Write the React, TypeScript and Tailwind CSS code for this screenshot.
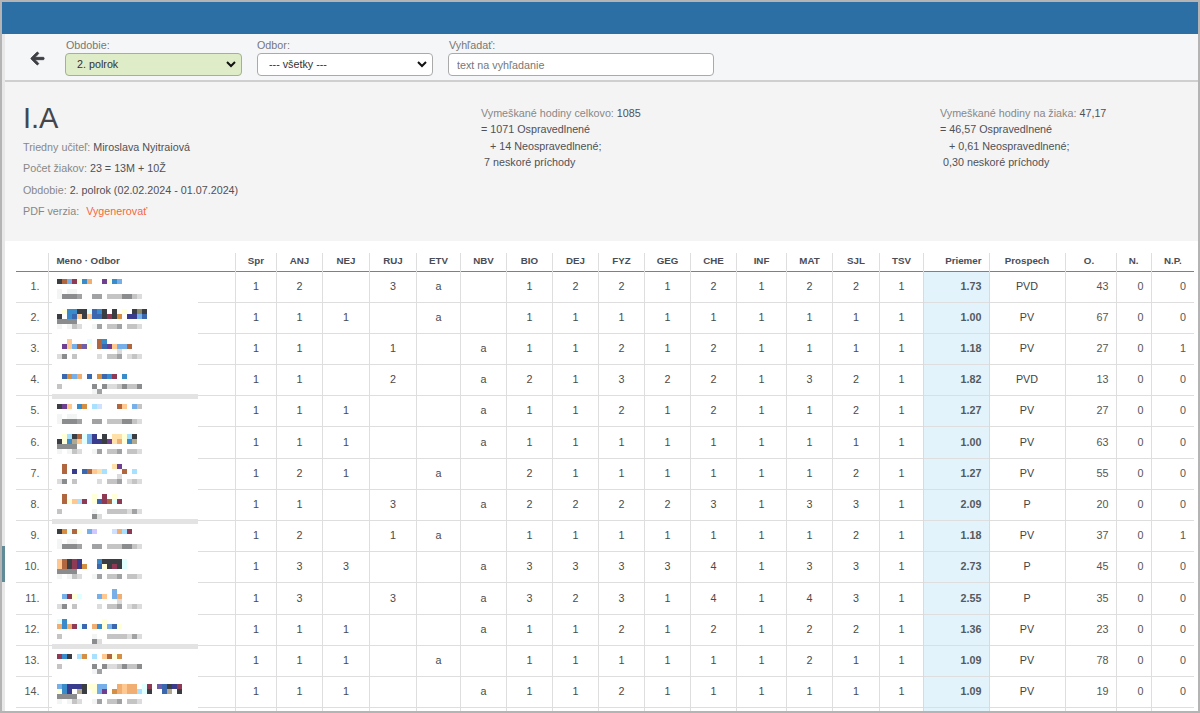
const palette: Record<string, string> = {
  d: '#3a3d42', b: '#3a8bc9', r: '#b0673f', m: '#8f3a55', o: '#d48f45', p: '#f0ae72',
  P: '#ffc890', l: '#77b0e8', L: '#a8e0ff', s: '#3a67ae', n: '#393c8c', v: '#6f3f90',
  V: '#6f5fa8', y: '#ffffd8', g: '#8a8c8e', h: '#a0a2a4', i: '#c4c4c4', j: '#dcdcdc',
  k: '#f3f4f4', c: '#e0ffff', w: '#d0e0ff', W: '#d0c8ff', Q: '#ffe0a8', T: '#b0a890', O: '#8a8a6a',
};

const grayA = 'kgggh..hh.iiiggij';
const grayB = 'k.kij..kh.iih.iij';
const grayC = 'jg.i....j.iih.jij';

type Mosaic = { lines: [number, string][]; bar?: boolean };

const mosaics: Mosaic[] = [
  { lines: [[7, 'drlmybp..vybl'], [17, 'k.kk'], [22, grayA]] },
  { lines: [[6, '.ybbddcsbd.d.y.dOd'], [11, 'd.bsPdPssdmdo.nnls'], [16, 'gggg'], [21, grayB]] },
  { lines: [[5, '..P...c.rb'], [10, '.vPlrVy.rsvPllr'], [15, '............j'], [20, grayC]] },
  { lines: [[9, '.solp.s.osbm.b'], [19, 'i......g.gjjigiig'], [24, '.......kh']], bar: true },
  { lines: [[8, 'dvP.bo.Lw...rP.li'], [18, 'k.kk'], [23, grayA]] },
  { lines: [[7, '.yLdrcln.d.QQyLd'], [12, 'dybTPclnndvQpybT'], [17, 'gggg'], [22, grayB]] },
  { lines: [[5, '.r.........Qv'], [10, '.r.n.srPQL...r.L'], [15, '............j'], [20, grayC]] },
  { lines: [[4, '.r.....y.m.y'], [9, '.ryPLm.ysmrcm'], [19, 'i......k..iiiijhj'], [24, '.......gj']], bar: true },
  { lines: [[8, 'docry.lW...wpLm'], [18, 'k.kk'], [23, grayA]] },
  { lines: [[7, 'Prdmn...bddddc'], [12, 'Prdmno..sydmdc'], [17, 'gggg'], [22, grayB]] },
  { lines: [[6, '...........l'], [11, '.lmyc...lP.lp'], [16, '............j'], [21, grayC]] },
  { lines: [[4, 'cb.......y'], [9, 'pbpmcs.pbylsy'], [19, 'i......k..iiiijhj'], [24, '.......gj']], bar: true },
  { lines: [[8, 'mbd.Lo.L.Pryo'], [18, 'i......g.gjjigiig'], [23, '.......kh']] },
  { lines: [[7, 'lbnnndyyll..pPpp.cm.Vsdnm'], [12, 'ybn.Td.ylv.opPppLcd..sT.d'], [17, 'gggg'], [22, grayB]] },
];

const subjects = ['Spr', 'ANJ', 'NEJ', 'RUJ', 'ETV', 'NBV', 'BIO', 'DEJ', 'FYZ', 'GEG', 'CHE', 'INF', 'MAT', 'SJL', 'TSV'];
const widths = [41, 46, 47, 47, 44, 46, 46, 46, 46, 46, 46, 50, 46, 47, 44];

const students = [
  { g: '1 2 _ 3 a _ 1 2 2 1 2 1 2 2 1', avg: '1.73', res: 'PVD', o: 43, n: 0, np: 0, h: 'h-[31px]' },
  { g: '1 1 1 _ a _ 1 1 1 1 1 1 1 1 1', avg: '1.00', res: 'PV', o: 67, n: 0, np: 0, h: 'h-[31px]' },
  { g: '1 1 _ 1 _ a 1 1 2 1 2 1 1 1 1', avg: '1.18', res: 'PV', o: 27, n: 0, np: 1, h: 'h-[31px]' },
  { g: '1 1 _ 2 _ a 2 1 3 2 2 1 3 2 1', avg: '1.82', res: 'PVD', o: 13, n: 0, np: 0, h: 'h-[31px]' },
  { g: '1 1 1 _ _ a 1 1 2 1 2 1 1 2 1', avg: '1.27', res: 'PV', o: 27, n: 0, np: 0, h: 'h-[31px]' },
  { g: '1 1 1 _ _ a 1 1 1 1 1 1 1 1 1', avg: '1.00', res: 'PV', o: 63, n: 0, np: 0, h: 'h-[32px]' },
  { g: '1 2 1 _ a _ 2 1 1 1 1 1 1 2 1', avg: '1.27', res: 'PV', o: 55, n: 0, np: 0, h: 'h-[31px]' },
  { g: '1 1 _ 3 _ a 2 2 2 2 3 1 3 3 1', avg: '2.09', res: 'P', o: 20, n: 0, np: 0, h: 'h-[31px]' },
  { g: '1 2 _ 1 a _ 1 1 1 1 1 1 1 2 1', avg: '1.18', res: 'PV', o: 37, n: 0, np: 1, h: 'h-[31px]' },
  { g: '1 3 3 _ _ a 3 3 3 3 4 1 3 3 1', avg: '2.73', res: 'P', o: 45, n: 0, np: 0, h: 'h-[31px]' },
  { g: '1 3 _ 3 _ a 3 2 3 1 4 1 4 3 1', avg: '2.55', res: 'P', o: 35, n: 0, np: 0, h: 'h-[32px]' },
  { g: '1 1 1 _ _ a 1 1 2 1 2 1 2 2 1', avg: '1.36', res: 'PV', o: 23, n: 0, np: 0, h: 'h-[31px]' },
  { g: '1 1 1 _ a _ 1 1 1 1 1 1 2 1 1', avg: '1.09', res: 'PV', o: 78, n: 0, np: 0, h: 'h-[31px]' },
  { g: '1 1 1 _ _ a 1 1 2 1 1 1 1 1 1', avg: '1.09', res: 'PV', o: 19, n: 0, np: 0, h: 'h-[31px]' },
];

// pixelated names are a picture in the reference, so they go in as svg blocks
function NameMosaic({ mosaic }: { mosaic: Mosaic }) {
  return (
    <div className={`absolute top-0 left-[3px] w-[146px] bg-white ${mosaic.bar ? 'z-[1] h-[34px]' : 'h-[32px]'}`}>
      <svg width="190" height="34" className="block overflow-visible">
        {mosaic.lines.map(([y, cells]) =>
          cells.split('').map((c, i) =>
            c === '.' ? null : <rect key={`${y}-${i}`} x={5 + i * 5} y={y} width="5" height="5" fill={palette[c]} />,
          ),
        )}
        {mosaic.bar && <rect x="0" y="29" width="146" height="5" fill="#e3e3e3" />}
      </svg>
    </div>
  );
}

function Label({ children }: { children: React.ReactNode }) {
  return <span className="text-[#888]">{children}</span>;
}

function Chevron() {
  return (
    <svg width="10" height="7" viewBox="0 0 10 7" fill="none" stroke="#111" strokeWidth="2">
      <path d="M1 1l4 4 4-4" />
    </svg>
  );
}

export default function App() {
  return (
    <div className="h-[713px] w-[1200px] overflow-hidden bg-[#b4b4b4] p-[2px] font-['Liberation_Sans',Arial,sans-serif] text-[10.75px] text-[#4f5157]">
      <div className="relative flex h-full flex-col overflow-hidden bg-white">
        {/* scrollbar tick on the left edge */}
        <div className="absolute top-[544px] left-0 h-[36px] w-[3px] bg-[#5f8a96]" />
        <div className="h-[32px] shrink-0 bg-[#2b6fa4]" />
        <div className="flex min-h-0 flex-1 flex-col border-l-[3px] border-[#e8e8e8]">
          {/* filters */}
          <div className="flex h-[48px] shrink-0 items-start border-b-2 border-[#cfcfcf] bg-[#f5f6f8] pt-[5px]">
            <div className="flex w-[60px] justify-center pt-[12px] pl-[4px]">
              <svg width="15" height="15" viewBox="0 0 448 512" className="fill-[#3d3f45] stroke-[#3d3f45] stroke-[30]">
                <path d="M257.5 445.1l-22.2 22.2c-9.4 9.4-24.6 9.4-33.9 0L7 273c-9.4-9.4-9.4-24.6 0-33.9L201.4 44.7c9.4-9.4 24.6-9.4 33.9 0l22.2 22.2c9.5 9.5 9.3 25-.4 34.3L136.6 216H424c13.3 0 24 10.7 24 24v32c0 13.3-10.7 24-24 24H136.6l120.5 114.8c9.8 9.3 10 24.8.4 34.3z" />
              </svg>
            </div>
            <div className="w-[192px]">
              <div className="h-[13px] pl-[1px] leading-[13px] text-[#777]">Obdobie:</div>
              <div className="mt-[1px] flex h-[23px] w-[177px] items-center justify-between rounded-[4px] border border-[#a3b28f] bg-[#deecc8] pr-[5px] pl-[11px] text-[#333]">
                2. polrok
                <Chevron />
              </div>
            </div>
            <div className="w-[191px]">
              <div className="h-[13px] leading-[13px] text-[#777]">Odbor:</div>
              <div className="mt-[1px] flex h-[23px] w-[176px] items-center justify-between rounded-[4px] border border-[#aaa] bg-white pr-[5px] pl-[11px] text-[#333]">
                --- všetky ---
                <Chevron />
              </div>
            </div>
            <div>
              <div className="h-[13px] pl-[1px] leading-[13px] text-[#777]">Vyhľadať:</div>
              <input
                placeholder="text na vyhľadanie"
                className="mt-[1px] block h-[23px] w-[266px] rounded-[4px] border border-[#aaa] bg-white px-[8px] text-[10.75px] placeholder:text-[#777]"
              />
            </div>
          </div>

          {/* class summary */}
          <div className="flex h-[159px] shrink-0 bg-[#f4f4f4] pl-[18px]">
            <div className="w-[458px] pt-[19px]">
              <div className="text-[29px] leading-[34px] font-normal text-[#43464d]">I.A</div>
              <div className="mt-[2px] leading-[21.3px]">
                <div><Label>Triedny učiteľ:</Label> Miroslava Nyitraiová</div>
                <div><Label>Počet žiakov:</Label> 23 = 13M + 10Ž</div>
                <div><Label>Obdobie:</Label> 2. polrok (02.02.2024 - 01.07.2024)</div>
                <div><Label>PDF verzia:</Label><span className="ml-[7px] text-[#f4683c]">Vygenerovať</span></div>
              </div>
            </div>
            <div className="w-[459px] pt-[23px] leading-[16.3px]">
              <div><Label>Vymeškané hodiny celkovo:</Label> 1085</div>
              <div>= 1071 Ospravedlnené</div>
              <div className="pl-[9px]">+ 14 Neospravedlnené;</div>
              <div className="pl-[3px]">7 neskoré príchody</div>
            </div>
            <div className="pt-[23px] leading-[16.3px]">
              <div><Label>Vymeškané hodiny na žiaka:</Label> 47,17</div>
              <div>= 46,57 Ospravedlnené</div>
              <div className="pl-[9px]">+ 0,61 Neospravedlnené;</div>
              <div className="pl-[3px]">0,30 neskoré príchody</div>
            </div>
          </div>

          {/* grades */}
          <div className="min-h-0 flex-1 overflow-hidden bg-white pt-[12px] pl-[11px]">
            <table className="w-[1177px] table-fixed border-collapse">
              <colgroup>
                <col className="w-[32px]" />
                <col className="w-[187px]" />
                {widths.map((w, i) => (
                  <col key={i} style={{ width: w }} />
                ))}
                <col className="w-[66px]" />
                <col className="w-[76px]" />
                <col className="w-[51px]" />
                <col className="w-[35px]" />
                <col className="w-[43px]" />
              </colgroup>
              <thead>
                <tr className="h-[18px] border-b border-[#808080] text-[9.75px] font-bold text-[#4a4d55]">
                  <th />
                  <th className="border-l border-[#dedede] pl-[8px] text-left font-bold">Meno · Odbor</th>
                  {subjects.map((s) => (
                    <th key={s} className="border-l border-[#dedede] pl-[1px] font-bold">{s}</th>
                  ))}
                  <th className="border-l border-[#dedede] pr-[7px] text-right font-bold">Priemer</th>
                  <th className="border-l border-[#dedede] font-bold">Prospech</th>
                  <th className="border-l border-[#dedede] pr-[3px] text-center font-bold">O.</th>
                  <th className="border-l border-[#dedede] font-bold">N.</th>
                  <th className="border-l border-[#dedede] font-bold">N.P.</th>
                </tr>
              </thead>
              <tbody>
                {students.map((st, idx) => (
                  <tr key={idx} className={`${st.h} border-b border-[#dedede]`}>
                    <td className="pr-[8px] text-right text-[#555]">{idx + 1}.</td>
                    <td className="relative border-l border-[#dedede] p-0">
                      <NameMosaic mosaic={mosaics[idx]} />
                    </td>
                    {st.g.split(' ').map((v, i) => (
                      <td key={i} className="border-l border-[#dedede] pl-[1px] text-center text-[#4a4a4a]">
                        {v === '_' ? '' : v}
                      </td>
                    ))}
                    <td className="border-l border-[#cfdde6] bg-[#e2f3fc] pr-[7px] text-right font-bold text-[#555a60]">{st.avg}</td>
                    <td className="border-l border-[#cfdde6] text-center text-[#444]">{st.res}</td>
                    <td className="border-l border-[#dedede] pr-[7px] text-right text-[#555]">{st.o}</td>
                    <td className="border-l border-[#dedede] pr-[7px] text-right text-[#555]">{st.n}</td>
                    <td className="border-l border-[#dedede] pr-[8px] text-right text-[#555]">{st.np}</td>
                  </tr>
                ))}
                <tr className="h-[6px]">
                  <td />
                  <td className="border-l border-[#dedede]" />
                  {subjects.map((s) => (
                    <td key={s} className="border-l border-[#dedede]" />
                  ))}
                  <td className="border-l border-[#cfdde6] bg-[#e2f3fc]" />
                  <td className="border-l border-[#cfdde6]" />
                  <td className="border-l border-[#dedede]" />
                  <td className="border-l border-[#dedede]" />
                  <td className="border-l border-[#dedede]" />
                </tr>
              </tbody>
            </table>
          </div>
        </div>
      </div>
    </div>
  );
}
